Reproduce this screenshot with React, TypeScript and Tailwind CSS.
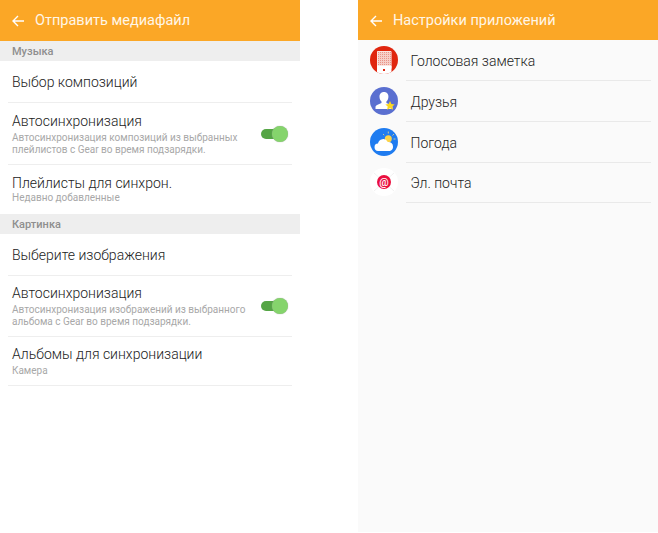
import React from 'react';

const Header = ({ title, h }: { title: string; h: string }) => (
  <header className={`flex items-center bg-[#fba726] pl-[12px] pt-[1px] text-white ${h}`}>
    <svg width="12" height="12" viewBox="0 0 12 12" fill="none" stroke="#fff" strokeWidth="1.4" className="mr-[11px]">
      <path d="M12 6H1M6 1L1 6l5 5" />
    </svg>
    <span className="pt-[1px] text-[14.5px] leading-none text-[#fff6e6]">{title}</span>
  </header>
);

const SectionLabel = ({ label }: { label: string }) => (
  <div className="flex h-[20px] items-center bg-[#eeeeee] pl-[12px] pt-[2px] text-[11px] font-medium text-[#8f8f8f]">{label}</div>
);

const Toggle = () => (
  <div className="relative h-[16px] w-[27px] shrink-0">
    <div className="absolute left-0 top-[3px] h-[10px] w-[22px] rounded-full bg-[#55a545]" />
    <div className="absolute right-0 top-0 h-[16px] w-[16px] rounded-full bg-[#85d46c] shadow-[0_0_1px_#999]" />
  </div>
);

type RowProps = { title: string; sub?: string[]; toggle?: boolean; h: string; subGap?: string };

const Row = ({ title, sub, toggle, h, subGap }: RowProps) => (
  <div className={`mx-[8px] flex items-center justify-between border-b border-[#eeeeee] pl-[4px] pr-[4px] ${h}`}>
    <div>
      <div className="text-[14px] font-light leading-[18px] text-[#222222]">{title}</div>
      <div className={subGap}>
        {sub?.map(s => (
          <div key={s} className="text-[10px] leading-[12px] text-[#a8a8a8]">{s}</div>
        ))}
      </div>
    </div>
    {toggle && <Toggle />}
  </div>
);

const VoiceIcon = () => (
  <svg width="28" height="28" viewBox="0 0 28 28">
    <defs>
      <clipPath id="voiceClip"><circle cx="14" cy="14" r="14" /></clipPath>
      <pattern id="voiceDots" width="2" height="2" patternUnits="userSpaceOnUse">
        <rect width="2" height="2" fill="#f6cfc8" />
        <rect width="1" height="1" fill="#ea9488" />
      </pattern>
    </defs>
    <g clipPath="url(#voiceClip)">
      <rect width="28" height="28" fill="#e0260f" />
      <rect x="7" y="5" width="14.500" height="18" rx="1" fill="#fff" />
      <rect x="7.500" y="5.500" width="13.500" height="14" fill="url(#voiceDots)" />
      <rect x="7" y="20" width="14.500" height="8" fill="#fff" />
      <rect x="13" y="23" width="2" height="2" fill="#e0260f" />
    </g>
  </svg>
);

const FriendsIcon = () => (
  <svg width="28" height="28" viewBox="0 0 28 28">
    <circle cx="14" cy="14" r="14" fill="#5a6fd0" />
    <path d="M14 5c3 0 4.600 2.200 4.400 5-.1 2-1 3.600-2 4.600v1.400c2 1 5 1.600 6 3.400v2.600H5.500v-2.600c1-1.800 4-2.400 6-3.400v-1.400c-1-1-1.900-2.600-2-4.600C9.300 7.200 11 5 14 5z" fill="#fff" />
    <path d="M20 14l1.400 3 3.300.4-2.400 2.200.6 3.200-2.900-1.600-2.900 1.600.6-3.200-2.400-2.200 3.300-.4z" fill="#fcd820" />
  </svg>
);

const WeatherIcon = () => (
  <svg width="28" height="28" viewBox="0 0 28 28">
    <circle cx="14" cy="14" r="14" fill="#1f7cf0" />
    <g stroke="#f7dc7a" strokeWidth="0.8">
      <path d="M18.300 3.500v2M24 6l-1.500 1.500M25.500 11h-2M13 6l1.200 1.200" />
    </g>
    <circle cx="18.300" cy="10.700" r="3.500" fill="#fbd34a" />
    <path d="M8.500 23a3.700 3.700 0 0 1-.5-7.400A5.200 5.200 0 0 1 17.800 14a4.500 4.500 0 0 1 5.200 4.500 4.400 4.400 0 0 1-3 4.500z" fill="#fff" />
  </svg>
);

const MailIcon = () => (
  <svg width="28" height="28" viewBox="0 0 28 28">
    <circle cx="14" cy="14" r="14" fill="#ffffff" />
    <path d="M4 5l20 18M24 5L4 23" stroke="#eeeeee" strokeWidth="0.8" />
    <circle cx="14" cy="14" r="7" fill="#ea0f3f" />
    <text x="14" y="17.500" textAnchor="middle" fontSize="10.500" fontWeight="500" fill="#fff">@</text>
  </svg>
);

const AppRow = ({ icon, label, h }: { icon: React.ReactNode; label: string; h: string }) => (
  <div className={`flex items-center pl-[12px] pr-[7px] ${h}`}>
    <div className="mr-[8px] h-[28px] w-[28px] shrink-0 -translate-y-[1px]">{icon}</div>
    <div className="flex h-full flex-1 items-center border-b border-[#e9e9e9] pl-[4.500px] pt-[2px] text-[14px] font-light text-[#222222]">{label}</div>
  </div>
);

export default function App() {
  return (
    <div className="flex h-[533px] w-[658px] gap-[58px] bg-white font-['Roboto',sans-serif]">
      <div className="w-[300px]">
        <Header h="h-[41px]" title="Отправить медиафайл" />
        <SectionLabel label="Музыка" />
        <Row h="h-[42px]" title="Выбор композиций" />
        <Row
          h="h-[62px]"
          toggle
          subGap="mt-[2px]"
          title="Автосинхронизация"
          sub={['Автосинхронизация композиций из выбранных', 'плейлистов с Gear во время подзарядки.']}
        />
        <Row h="h-[49px] border-transparent" title="Плейлисты для синхрон." sub={['Недавно добавленные']} />
        <SectionLabel label="Картинка" />
        <Row h="h-[42px]" title="Выберите изображения" />
        <Row
          h="h-[61px]"
          toggle
          subGap="mt-[2px]"
          title="Автосинхронизация"
          sub={['Автосинхронизация изображений из выбранного', 'альбома с Gear во время подзарядки.']}
        />
        <Row h="h-[49px]" subGap="mt-[2px]" title="Альбомы для синхронизации" sub={['Камера']} />
      </div>
      <div className="h-[532px] w-[300px] bg-[#fafafa]">
        <Header h="h-[40px]" title="Настройки приложений" />
        <AppRow h="h-[41px]" icon={<VoiceIcon />} label="Голосовая заметка" />
        <AppRow h="h-[41px]" icon={<FriendsIcon />} label="Друзья" />
        <AppRow h="h-[41px]" icon={<WeatherIcon />} label="Погода" />
        <AppRow h="h-[40px]" icon={<MailIcon />} label="Эл. почта" />
      </div>
    </div>
  );
}
